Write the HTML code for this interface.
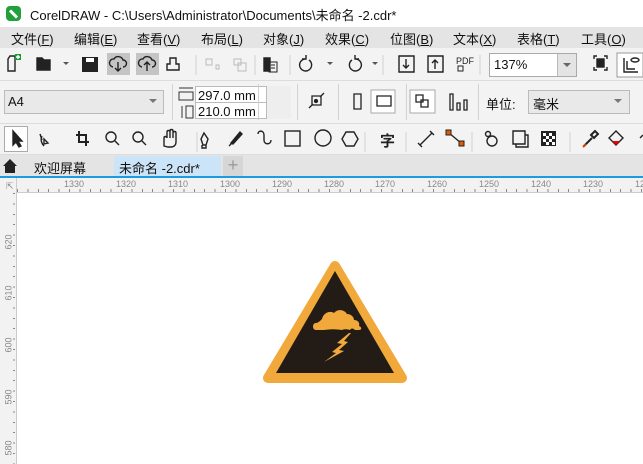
<!DOCTYPE html>
<html><head><meta charset="utf-8"><style>
*{margin:0;padding:0;box-sizing:border-box}
body{width:643px;height:464px;overflow:hidden;background:#fff;font-family:"Liberation Sans","Noto Sans CJK SC",sans-serif;position:relative;font-size:12px;color:#111}
.a{position:absolute}
.t{font-size:13px;white-space:nowrap}
.sep{position:absolute;width:1px;background:#d2d2d2}
.ic{position:absolute}
.inp{position:absolute;background:#fff;border:1px solid #aaa}
</style></head><body>
<div class="a" style="left:0;top:0;width:643px;height:27px;background:#fff"></div>
<div class="a" style="left:6px;top:6px;width:15px;height:15px;border-radius:4px;background:#1fa03a"></div>
<div class="a" style="top:9px;width:3px;height:10px;background:#fff;transform:rotate(-45deg);left:12px"></div>
<div class="a t" style="left:30px;top:5px;font-size:13px">CorelDRAW - C:\Users\Administrator\Documents\未命名 -2.cdr*</div>
<div class="a" style="left:0;top:27px;width:643px;height:21px;background:#e4e4e4"></div>
<div class="a t" style="top:29px;left:11px">文件(<u>F</u>)</div>
<div class="a t" style="top:29px;left:74px">编辑(<u>E</u>)</div>
<div class="a t" style="top:29px;left:137px">查看(<u>V</u>)</div>
<div class="a t" style="top:29px;left:201px">布局(<u>L</u>)</div>
<div class="a t" style="top:29px;left:263px">对象(<u>J</u>)</div>
<div class="a t" style="top:29px;left:325px">效果(<u>C</u>)</div>
<div class="a t" style="top:29px;left:390px">位图(<u>B</u>)</div>
<div class="a t" style="top:29px;left:453px">文本(<u>X</u>)</div>
<div class="a t" style="top:29px;left:517px">表格(<u>T</u>)</div>
<div class="a t" style="top:29px;left:581px">工具(<u>O</u>)</div>
<div class="a" style="left:0;top:48px;width:643px;height:107px;background:#f3f3f3"></div>
<div class="a" style="left:0;top:80px;width:643px;height:1px;background:#dcdcdc"></div>
<div class="a" style="left:0;top:123px;width:643px;height:1px;background:#dcdcdc"></div>
<div class="a" style="left:0;top:154px;width:643px;height:1px;background:#dcdcdc"></div>
<svg class="ic" style="left:0;top:48px" width="643" height="32" fill="none" stroke="#222" stroke-width="1.4">
<path d="M10 8h5v15H8V11z"/><rect x="15" y="6" width="6" height="6" fill="#1a9a35" stroke="none"/><path d="M18 7v4M16 9h4" stroke="#fff"/>
<path d="M37 10h5l2 2h6v10H37z" fill="#222"/><path d="M63 14l3 3 3-3z" fill="#555" stroke="none"/>
<rect x="82" y="9" width="16" height="15" fill="#222" stroke="none"/><rect x="86" y="10" width="8" height="4" fill="#fff" stroke="none"/>
<rect x="107" y="5" width="23" height="22" fill="#c4c4c4" stroke="none"/><rect x="136" y="5" width="23" height="22" fill="#c4c4c4" stroke="none"/>
<path d="M113 19a4 4 0 0 1 1-8a5 5 0 0 1 9 1a3 3 0 0 1 0 7M118 14v9M115 20l3 3 3-3"/>
<path d="M142 19a4 4 0 0 1 1-8a5 5 0 0 1 9 1a3 3 0 0 1 0 7M147 23v-9M144 17l3-3 3 3"/>
<path d="M170 10h6v6h3v6h-12v-6h3z"/>
<path d="M196 7v20M255 7v20M290 7v20M383 7v20M480 7v20" stroke="#d2d2d2" stroke-width="1"/>
<path d="M206 11h6v6h-6zM216 17h3v4h-3zM234 11h7v6h-7zM238 15h8v8h-8z" stroke="#bbb" stroke-width="1"/>
<path d="M264 10h6v13h-6z" fill="#222"/><path d="M269 14h8v10h-8zM271 17h4M271 20h4" stroke-width="1"/>
<path d="M305 11a6 6 0 1 0 4 1M302 11h4v-4"/><path d="M327 14l3 3 3-3z" fill="#555" stroke="none"/>
<path d="M356 11a6 6 0 1 1-4 1M359 11h-4v-4"/><path d="M372 14l3 3 3-3z" fill="#555" stroke="none"/>
<path d="M399 8h15v16h-15zM406 11v9M403 17l3 3 3-3"/>
<path d="M428 8h15v16h-15zM435 21v-9M432 15l3-3 3 3"/>
<text x="456" y="16" font-size="9" fill="#222" stroke="none" font-family="Liberation Sans">PDF</text><rect x="458" y="18" width="5" height="5" stroke-width="1"/>
<path d="M594 11v-3h3M604 8h3v3M607 19v3h-3M597 22h-3v-3"/><rect x="597" y="11" width="7" height="8" fill="#222"/>
<rect x="617" y="5" width="26" height="24" fill="#fff" stroke="#999" stroke-width="1"/><path d="M624 10v14h14M627 13v8h8"/><ellipse cx="635" cy="12" rx="4" ry="2"/>
</svg>
<div class="inp" style="left:489px;top:53px;width:88px;height:24px"></div>
<div class="a" style="left:557px;top:54px;width:19px;height:22px;background:#e4e4e4;border-left:1px solid #bbb"></div>
<div class="a" style="left:563px;top:63px;border:4px solid transparent;border-top-color:#666"></div>
<div class="a t" style="left:494px;top:57px">137%</div>
<div class="a" style="left:4px;top:90px;width:160px;height:24px;background:#e9e9e9;border:1px solid #bbb"></div>
<div class="a t" style="left:8px;top:94px">A4</div>
<div class="a" style="left:149px;top:99px;border:4px solid transparent;border-top-color:#777"></div>
<div class="sep" style="left:172px;top:84px;height:36px"></div>
<svg class="ic" style="left:176px;top:84px" width="20" height="36" fill="none" stroke="#333"><path d="M3 4h14M3 8h14v8H3zM6 22v12M10 22h7v12h-7z"/></svg>
<div class="inp" style="left:195px;top:86px;width:96px;height:33px;border-color:#bbb"></div>
<div class="a" style="left:195px;top:102px;width:96px;height:1px;background:#bbb"></div>
<div class="a" style="left:266px;top:86px;width:25px;height:33px;background:#eee;border-left:1px solid #bbb"></div>
<div class="a t" style="left:198px;top:88px">297.0 mm</div>
<div class="a t" style="left:198px;top:104px">210.0 mm</div>
<div class="sep" style="left:297px;top:84px;height:36px"></div>
<svg class="ic" style="left:300px;top:84px" width="340" height="36" fill="none" stroke="#222" stroke-width="1.3">
<path d="M12 12h9v9h-9zM9 24l4-4M20 13l4-4"/><circle cx="16" cy="17" r="1.5" fill="#222"/>
<path d="M54 10h7v15h-7z"/><rect x="71" y="6" width="24" height="23" fill="#fff" stroke="#aaa" stroke-width="1"/><path d="M77 12h14v10H77z"/>
<rect x="110" y="6" width="25" height="23" fill="#fff" stroke="#aaa" stroke-width="1"/><path d="M116 11h7v7h-7zM121 16h7v7h-7z"/>
<path d="M150 10h3v16h-3zM157 19h3v7h-3zM164 16h3v10h-3z"/>
</svg>
<div class="sep" style="left:258px;top:84px;height:36px"></div>
<div class="sep" style="left:338px;top:84px;height:36px"></div>
<div class="sep" style="left:406px;top:84px;height:36px"></div>
<div class="sep" style="left:478px;top:84px;height:36px"></div>
<div class="a t" style="left:486px;top:94px">单位:</div>
<div class="a" style="left:528px;top:90px;width:102px;height:24px;background:#e9e9e9;border:1px solid #bbb"></div>
<div class="a t" style="left:533px;top:94px">毫米</div>
<div class="a" style="left:614px;top:99px;border:4px solid transparent;border-top-color:#777"></div>
<div class="a" style="left:4px;top:126px;width:24px;height:26px;background:#fff;border:1px solid #aaa"></div>
<svg class="ic" style="left:0;top:124px" width="643" height="30" fill="none" stroke="#222" stroke-width="1.4">
<path d="M13 7v14l3-3 3 5 2-1-3-5h4z" fill="#222"/>
<path d="M40 10l2 6 M44 15l4 4-4 1z" /><path d="M42 12c-2 4 0 8 2 10"/>
<path d="M79 7v11h10M76 11h10v11" stroke-width="2"/>
<circle cx="111" cy="13" r="5"/><path d="M115 17l4 4"/>
<circle cx="138" cy="13" r="5"/><path d="M142 17l4 4"/>
<path d="M164 22v-8c0-2 3-2 3 0v-6c0-2 3-2 3 0v6-7c0-2 3-2 3 0v7-5c0-2 3-2 3 0v9c0 3-2 5-5 5h-3z"/>
<path d="M204 9l-3 6 2 6h3l2-6z M202 21v3h4v-3"/>
<path d="M231 19l9-11 2 2-9 10z" fill="#222"/><path d="M229 22l3-3"/>
<path d="M258 10c0-4 6-4 6 1v5c0 5 7 5 7 0"/>
<rect x="285" y="7" width="15" height="15"/>
<circle cx="323" cy="14" r="8"/>
<path d="M346 8h8l4 7-4 7h-8l-4-7z"/>
<text x="380" y="22" font-size="15" font-weight="bold" fill="#222" stroke="none" font-family="Noto Sans CJK SC">字</text>
<path d="M420 21l12-12M418 19l4 4M430 7l4 4"/>
<path d="M449 9l12 10" /><rect x="446" y="6" width="5" height="5" fill="#e65a00" stroke="#222" stroke-width="1"/><rect x="459" y="17" width="5" height="5" fill="#e65a00" stroke="#222" stroke-width="1"/>
<circle cx="488" cy="10" r="2.5"/><circle cx="492" cy="17" r="5"/>
<path d="M513 7h12v13h-12zM516 20v3h12V11h-3"/>
<rect x="541" y="7" width="15" height="15" fill="#222" stroke="none"/>
<path d="M543 9h3v3h-3zM549 9h3v3h-3zM546 12h3v3h-3zM552 12h3v3h-3zM543 15h3v3h-3zM549 15h3v3h-3zM546 18h3v3h-3zM552 18h3v3h-3z" fill="#fff" stroke="none"/>
<path d="M584 22l8-8M591 11l4-4 3 3-4 4z" stroke-width="2"/><path d="M583 23l3-3" stroke="#d04000" stroke-width="2"/>
<path d="M609 14l7-7 7 7-7 7z"/><path d="M612 17l4 4 4-4z" fill="#e00" stroke="none"/>
<path d="M640 14l3-3" />
<path d="M197 8v20M365 8v20M406 8v20M472 8v20M570 8v20" stroke="#d2d2d2" stroke-width="1"/>
</svg>
<div class="a" style="left:0;top:155px;width:643px;height:21px;background:#e4e4e4"></div>
<svg class="ic" style="left:2px;top:157px" width="16" height="17"><path d="M1 9l7-7 7 7h-2v7H3V9z" fill="#222"/></svg>
<div class="a t" style="left:34px;top:158px">欢迎屏幕</div>
<div class="a" style="left:114px;top:156px;width:107px;height:20px;background:#cce4f7"></div>
<div class="a t" style="left:119px;top:158px">未命名 -2.cdr*</div>
<div class="a" style="left:223px;top:156px;width:20px;height:20px;background:#d6d6d6;color:#999;font-size:18px;text-align:center;line-height:19px">+</div>
<div class="a" style="left:0;top:176px;width:643px;height:2px;background:#1e9be0"></div>
<div class="a" style="left:0;top:178px;width:643px;height:15px;background:#f2f2f2;border-bottom:1px solid #ccc"></div>
<div class="a" style="left:0;top:178px;width:17px;height:286px;background:#f2f2f2;border-right:1px solid #ccc"></div>
<div class="a" style="left:6px;top:181px;font-size:9px;color:#888">⇱</div>
<div class="a" style="left:17px;top:189px;width:626px;height:3px;background:repeating-linear-gradient(90deg,#888 0 1px,transparent 1px 10.4px)"></div>
<div class="a" style="left:13px;top:193px;width:2px;height:271px;background:repeating-linear-gradient(180deg,#888 0 1px,transparent 1px 10.4px)"></div>
<div class="a" style="top:179px;left:0;font-size:9px;color:#888;width:643px;height:12px">
<span class="a" style="left:64px">1330</span><span class="a" style="left:116px">1320</span><span class="a" style="left:168px">1310</span><span class="a" style="left:220px">1300</span><span class="a" style="left:272px">1290</span><span class="a" style="left:324px">1280</span><span class="a" style="left:375px">1270</span><span class="a" style="left:427px">1260</span><span class="a" style="left:479px">1250</span><span class="a" style="left:531px">1240</span><span class="a" style="left:583px">1230</span><span class="a" style="left:635px">12</span>
</div>
<div class="a" style="left:1px;top:175px;font-size:9px;color:#888">
<span class="a" style="top:62px;transform:rotate(-90deg)">620</span><span class="a" style="top:113px;transform:rotate(-90deg)">610</span><span class="a" style="top:165px;transform:rotate(-90deg)">600</span><span class="a" style="top:217px;transform:rotate(-90deg)">590</span><span class="a" style="top:268px;transform:rotate(-90deg)">580</span>
</div>
<svg class="ic" style="left:250px;top:250px" width="170" height="140">
<path d="M85 16L18 128H152Z" fill="#f2a93b" stroke="#f2a93b" stroke-width="10" stroke-linejoin="round"/>
<path d="M85 21L26 123H144Z" fill="#231c16"/>
<path d="M66 80c-4 0-4-7 0-7c2 0 4-2 6-4c1-6 8-9 12-6c3-4 10-4 13 1c4 0 7 3 7 6c4 0 6 3 5 6c3 1 3 4 0 4h-4c-2-2-4-2-5 0c-3-1-6-1-8 0c-6-1-12-1-18 0z" fill="#f2a93b"/>
<path d="M99 83l-12 10 5 1-10 8 4 1-12 9 20-11-5-1 9-8-4-1 7-8z" fill="#f2a93b"/>
</svg>
</body></html>
